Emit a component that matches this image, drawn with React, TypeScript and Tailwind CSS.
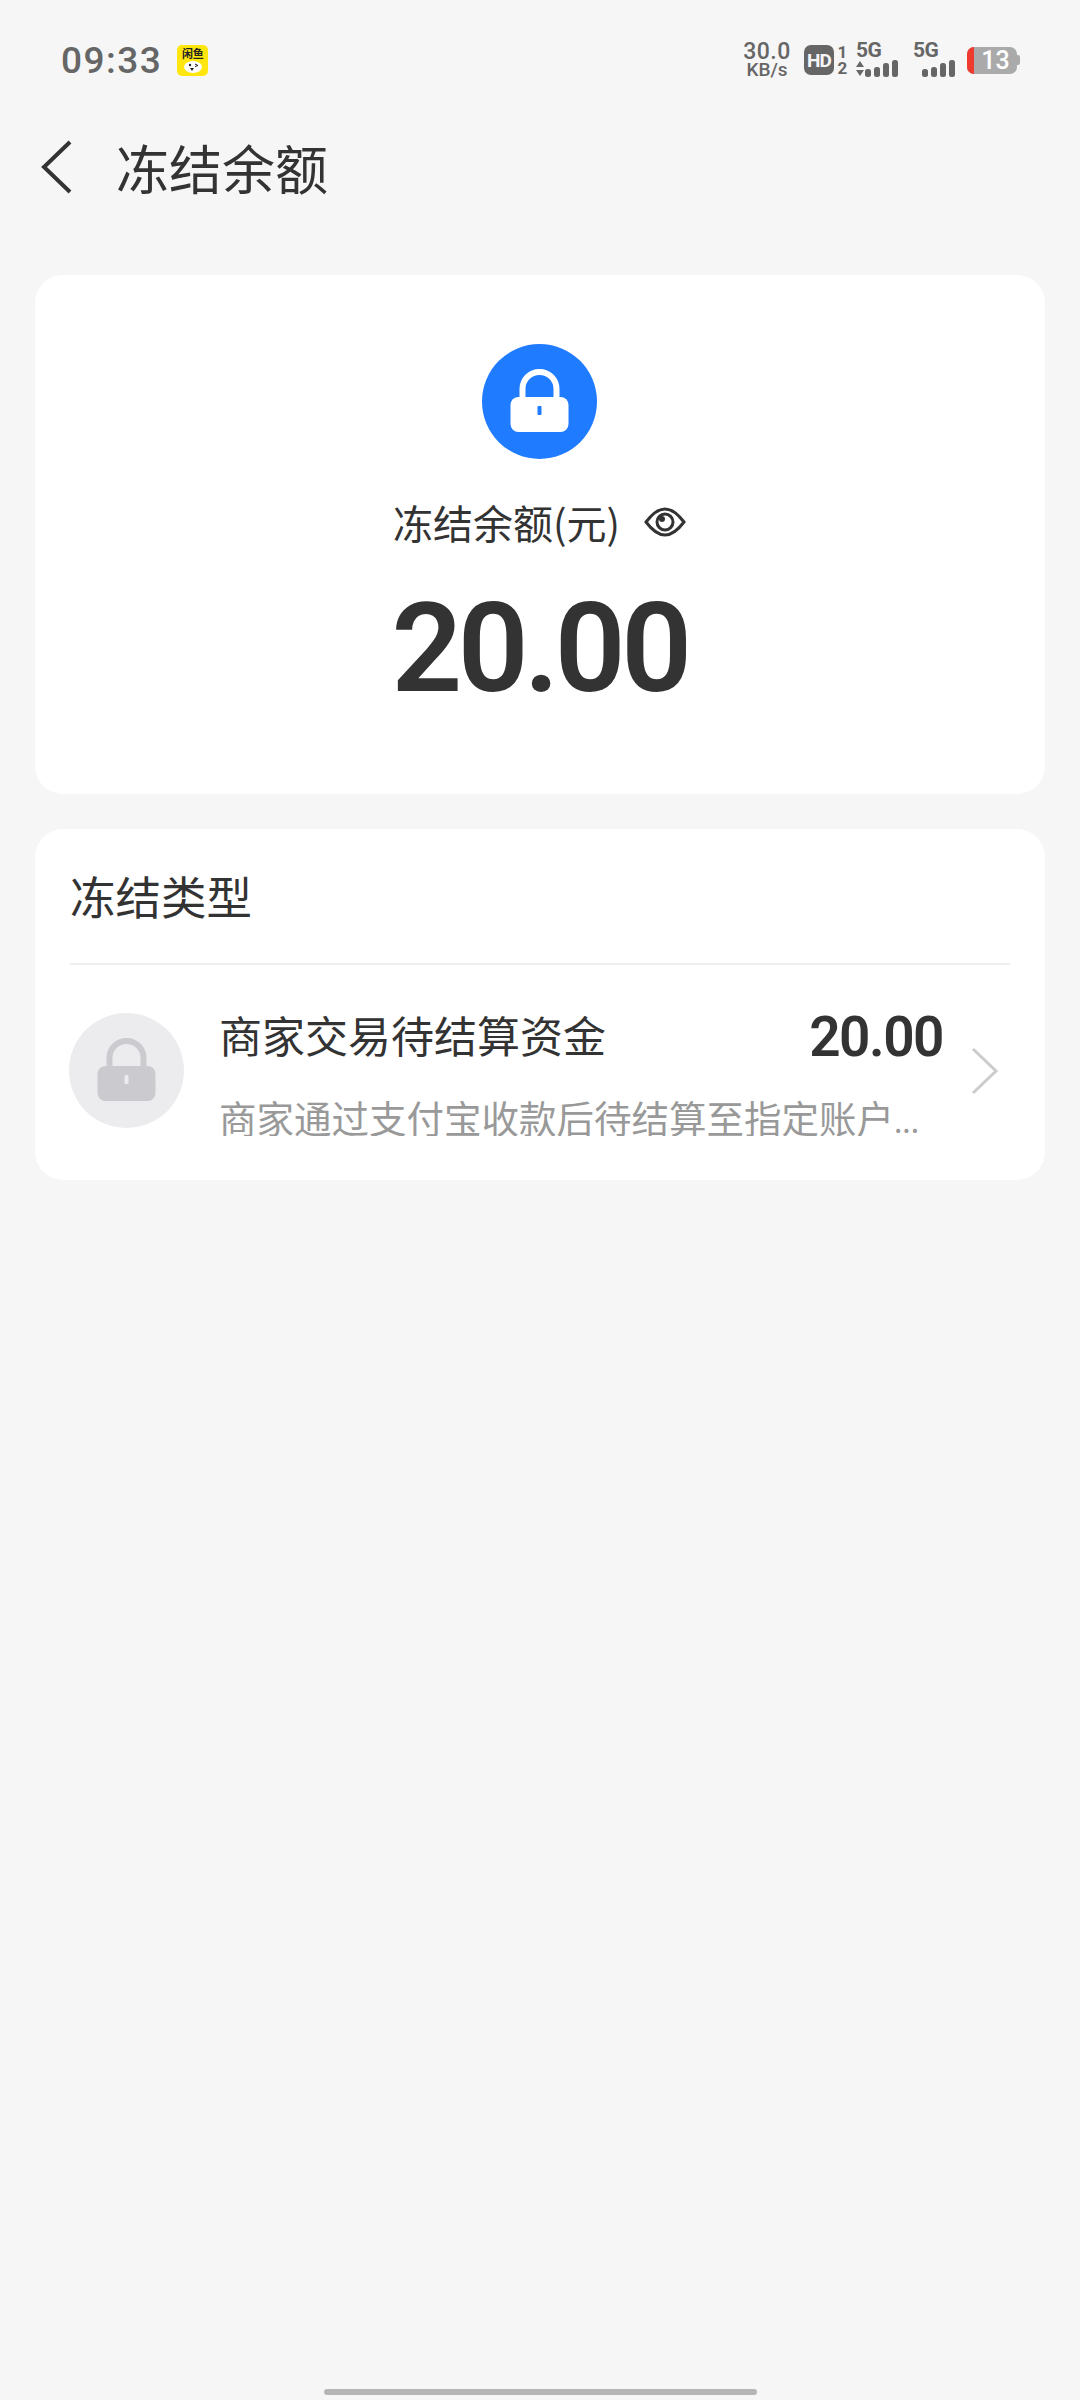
const cjk = "font-['Noto_Sans_CJK_SC','Noto_Sans',sans-serif]";

const LockBadge = ({ bg, fg, hole }: { bg: string; fg: string; hole: string }) => (
  <svg width="115" height="115" viewBox="0 0 115 115" className="block shrink-0">
    <circle cx="57.5" cy="57.5" r="57.5" fill={bg} />
    <path d="M40.5 56V45a17 17 0 0 1 34 0v11" fill="none" stroke={fg} strokeWidth="6" />
    <rect x="28.5" y="53" width="58" height="35" rx="8" fill={fg} />
    <rect x="55.5" y="62" width="4" height="9" rx="1" fill={hole} />
  </svg>
);

const Signal = ({ arrows }: { arrows?: boolean }) => (
  <div className="flex w-[44px] flex-col">
    <span className="h-[17px] text-[21px] leading-[17px] font-bold tracking-[-0.5px] text-[#666] font-['Roboto',sans-serif]">5G</span>
    <svg width="44" height="19" viewBox="0 0 44 19" className="block">
      {arrows && <path d="M0 8 4 2l4 6zM0 11h8l-4 6z" fill="#666" />}
      <rect x="9" y="10" width="6" height="8" rx="2.5" fill="#666" />
      <rect x="18" y="8" width="6" height="10" rx="2.5" fill="#666" />
      <rect x="27" y="4" width="6" height="14" rx="2.5" fill="#666" />
      <rect x="36" y="1" width="6" height="17" rx="2.5" fill="#666" />
    </svg>
  </div>
);

const App = () => {
  return (
    <div className={`flex h-[2400px] w-[1080px] flex-col overflow-hidden bg-[#f6f6f6] ${cjk}`}>
      {/* status bar */}
      <div className="flex h-[116px] shrink-0 items-center justify-between pt-[4px] pr-[60px] pl-[61px]">
        <div className="flex items-center gap-[15px]">
          <span className="text-[37px] leading-none font-medium tracking-[1.500px] text-[#666] font-['Roboto',sans-serif]">09:33</span>
          <div className="flex h-[31px] w-[31px] flex-col items-center overflow-hidden rounded-[5px] bg-[#ffe60f]">
            <span className="h-[15px] text-[11px] leading-[16px] font-bold text-[#222]">闲鱼</span>
            <svg width="20" height="13" viewBox="0 0 20 13">
              <ellipse cx="10" cy="7" rx="9" ry="6" fill="#fff" />
              <circle cx="7" cy="5" r="1.2" fill="#222" />
              <path d="M12 4l3 1.500-3 1" fill="none" stroke="#222" />
              <path d="M7 8h4l-2 3z" fill="#222" />
            </svg>
          </div>
        </div>
        <div className="flex items-center font-['Roboto',sans-serif]">
          <div className="flex w-[50px] flex-col items-center text-[#666]">
            <span className="h-[18px] text-[23px] leading-[18px] font-medium tracking-[0.5px]">30.0</span>
            <span className="h-[17px] text-[19px] leading-[17px] font-medium">KB/s</span>
          </div>
          <div className="ml-[12px] flex h-[30px] w-[30px] items-center justify-center rounded-[7px] bg-[#666] text-[19px] leading-none font-bold tracking-[-1px] text-[#f6f6f6]">HD</div>
          <div className="ml-[3px] flex w-[11px] flex-col items-center text-[17px] leading-[16px] font-bold text-[#666]">
            <span>1</span>
            <span>2</span>
          </div>
          <div className="ml-[8px]">
            <Signal arrows />
          </div>
          <div className="ml-[13px]">
            <Signal />
          </div>
          <div className="ml-[10px] flex items-center">
            <div className="flex h-[27px] w-[50px] overflow-hidden rounded-[7px] bg-[#aaaaaa]">
              <div className="h-full w-[7px] bg-[#ee3a2f]" />
              <span className="flex-1 text-center text-[25px] leading-[27px] font-medium text-white">13</span>
            </div>
            <div className="h-[10px] w-[3px] rounded-r-[2px] bg-[#aaaaaa]" />
          </div>
        </div>
      </div>

      {/* title bar */}
      <div className="flex h-[102px] shrink-0 items-center pl-[40px]">
        <svg width="32" height="54" viewBox="0 0 32 54" className="block">
          <path d="M30 2 4 27l26 25" fill="none" stroke="#333" strokeWidth="4" />
        </svg>
        <h1 className="ml-[44px] text-[53px] leading-none font-normal text-[#333]">冻结余额</h1>
      </div>

      {/* balance card */}
      <section className="mx-[35px] mt-[57px] flex h-[519px] shrink-0 flex-col items-center rounded-[28px] bg-white pt-[69px] pr-[1px]">
        <LockBadge bg="#1f7bff" fg="#fff" hole="#1f7bff" />
        <div className="mt-[35px] flex h-[56px] items-center">
          <span className="text-[40px] leading-none text-[#333]">冻结余额(元)</span>
          <svg width="42" height="32" viewBox="0 0 42 32" className="ml-[24px] block">
            <path d="M2 16C8 8 14 3 21 3s13 5 19 13c-6 8-12 13-19 13S8 24 2 16Z" fill="none" stroke="#333" strokeWidth="3" />
            <circle cx="21" cy="16" r="8" fill="none" stroke="#333" strokeWidth="3" />
            <circle cx="18" cy="13" r="3" fill="#333" />
          </svg>
        </div>
        <div className="mt-[49px] h-[100px] text-[124px] leading-[100px] font-semibold tracking-[-4.500px] text-[#333] font-['Roboto',sans-serif]">20.00</div>
      </section>

      {/* freeze types card */}
      <section className="mx-[35px] mt-[35px] flex h-[351px] shrink-0 flex-col rounded-[28px] bg-white">
        <div className="flex h-[134px] shrink-0 items-center px-[35px] text-[45.500px] leading-none text-[#333]">冻结类型</div>
        <div className="mx-[35px] h-[2px] shrink-0 bg-[#eeeeee]" />
        <div className="flex flex-1 items-start pl-[34px]">
          <div className="mt-[48px]">
            <LockBadge bg="#ececee" fg="#cbcbcf" hole="#ececee" />
          </div>
          <div className="ml-[35px] w-[724px] pt-[42px]">
            <div className="flex h-[60px] items-center justify-between">
              <span className="mb-[5px] text-[43px] leading-none text-[#333]">商家交易待结算资金</span>
              <span className="text-[55px] leading-none font-semibold tracking-[-1.500px] text-[#333] font-['Roboto',sans-serif]">20.00</span>
            </div>
            <div className="mt-[27px] h-[42px] overflow-hidden text-[37.500px] leading-[46px] whitespace-nowrap text-[#999]">
              商家通过支付宝收款后待结算至指定账户<span className="text-[30px]">...</span>
            </div>
          </div>
          <svg width="28" height="48" viewBox="0 0 28 48" className="mt-[82px] ml-[28px] block">
            <path d="M2 2l23 22L2 46" fill="none" stroke="#cccccc" strokeWidth="3" />
          </svg>
        </div>
      </section>

      {/* home indicator */}
      <div className="mt-auto mb-[5px] h-[6px] w-[433px] self-center rounded-full bg-[#b5b5b5]" />
    </div>
  );
};

export default App;
